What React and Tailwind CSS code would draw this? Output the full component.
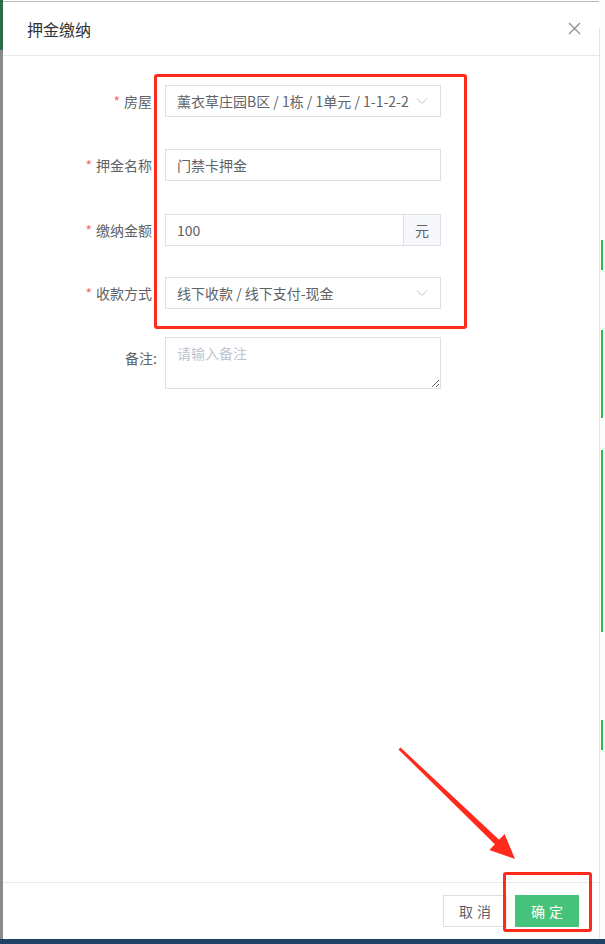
import React from "react";

const font = { fontFamily: '"Noto Sans CJK SC", "Microsoft YaHei", sans-serif' };

// 下拉箭头
const Chevron = () => (
  <svg width="12" height="8" viewBox="0 0 12 8" className="shrink-0">
    <path d="M1 1.5 L6 6.5 L11 1.5" fill="none" stroke="#c0c4cc" strokeWidth="1" />
  </svg>
);

const FormRow = ({ label, required, children, className = "", labelClass = "" }) => (
  <div className={`flex ${className}`}>
    <label className={`w-[162px] shrink-0 text-right text-[14px] leading-[20px] text-[#606266] ${labelClass}`}>
      {required && <span className="mr-[4px] text-[#f56c6c]">*</span>}
      {label}
    </label>
    {children}
  </div>
);

const App = () => {
  return (
    <div className="relative flex h-[944px] w-[605px] flex-col overflow-hidden bg-white" style={font}>
      <div className="flex min-h-0 flex-1">
        {/* 左侧背景条 */}
        <div className="flex w-[3px] shrink-0 flex-col">
          <div className="h-[50px] bg-[#2b6b48]" />
          <div className="flex-1 bg-[#8a8a8a]" />
        </div>

        {/* 弹窗 */}
        <div className="mt-px flex w-[596px] shrink-0 flex-col border-t border-[#b8b8b8] bg-white">
          <div className="flex h-[54px] items-center justify-between border-b border-[#e8e8e8] pl-[24px] pr-[18px]">
            <span className="text-[16px] text-[#303133]">押金缴纳</span>
            <svg width="13" height="13" viewBox="0 0 13 13">
              <path d="M1 1 L12 12 M12 1 L1 12" stroke="#909399" strokeWidth="1.4" />
            </svg>
          </div>

          <div className="flex-1 pt-[29px]">
            <FormRow label="房屋" required className="mb-[32px] items-center" labelClass="pr-[13px]">
              <div className="flex h-[32px] w-[276px] items-center justify-between border border-[#dcdfe6] pl-[11px] pr-[12px] text-[14px] text-[#606266]">
                <span className="whitespace-nowrap">薰衣草庄园B区 / 1栋 / 1单元 / 1-1-2-2</span>
                <Chevron />
              </div>
            </FormRow>

            <FormRow label="押金名称" required className="mb-[33px] items-center" labelClass="pr-[13px]">
              <div className="flex h-[32px] w-[276px] items-center border border-[#dcdfe6] px-[11px] text-[14px] text-[#606266]">
                门禁卡押金
              </div>
            </FormRow>

            <FormRow label="缴纳金额" required className="mb-[31px] items-center" labelClass="pr-[13px]">
              <div className="flex h-[32px] w-[276px] border border-[#dcdfe6] text-[14px] text-[#606266]">
                <div className="flex flex-1 items-center px-[11px]">100</div>
                <div className="flex w-[37px] items-center justify-center border-l border-[#dcdfe6] bg-[#f5f7fa]">元</div>
              </div>
            </FormRow>

            <FormRow label="收款方式" required className="mb-[28px] items-center" labelClass="pr-[13px]">
              <div className="flex h-[32px] w-[276px] items-center justify-between border border-[#dcdfe6] pl-[11px] pr-[12px] text-[14px] text-[#606266]">
                <span>线下收款 / 线下支付-现金</span>
                <Chevron />
              </div>
            </FormRow>

            <FormRow label="备注:" className="items-start" labelClass="pr-[8px] pt-[11px]">
              <textarea
                placeholder="请输入备注"
                className="h-[52px] w-[276px] border border-[#dcdfe6] px-[11px] py-[5px] text-[14px] leading-[21px] text-[#606266] outline-none placeholder:text-[#c0c4cc]"
              />
            </FormRow>
          </div>

          <div className="flex h-[57px] justify-end gap-[8px] border-t border-[#e8e8e8] pr-[20px] pt-[12px]">
            <button className="flex h-[32px] w-[64px] items-center justify-center gap-[4px] border border-[#dcdfe6] bg-white text-[14px] text-[#606266]">
              <span>取</span>
              <span>消</span>
            </button>
            <button className="flex h-[32px] w-[64px] items-center justify-center gap-[4px] bg-[#46c37b] text-[14px] text-white">
              <span>确</span>
              <span>定</span>
            </button>
          </div>
        </div>

        {/* 右侧背景 */}
        <div className="flex flex-1">
          <div className="mt-[28px] w-px bg-[#e4e4e4]" />
          <div className="flex w-[3px] flex-col bg-[#fcfcfc]">
            <div className="h-[240px]" />
            <div className="ml-px h-[30px] w-[2px] bg-[#2cbf4c]" />
            <div className="h-[60px]" />
            <div className="ml-px h-[88px] w-[2px] bg-[#2cbf4c]" />
            <div className="h-[32px]" />
            <div className="ml-px h-[182px] w-[2px] bg-[#2cbf4c]" />
            <div className="h-[88px]" />
            <div className="ml-px h-[30px] w-[2px] bg-[#2cbf4c]" />
          </div>
          <div className="flex-1 bg-[#fcfcfc]" />
        </div>
      </div>
      <div className="h-[5px] bg-[#1f4266]" />

      {/* 标注 */}
      <div className="pointer-events-none absolute left-[154px] top-[74px] h-[255px] w-[313px] rounded-[3px] border-[3px] border-[#ff2a1c]" />
      <div className="pointer-events-none absolute left-[503px] top-[872px] h-[60px] w-[89px] rounded-[3px] border-[3px] border-[#ff2a1c]" />
      <svg className="pointer-events-none absolute left-0 top-0" width="605" height="944">
        <polygon
          points="398.5,749.5 400.5,747.5 499.1,839.8 504.6,834.1 515,859 489.4,849.9 494.9,844.2"
          fill="#ff2a1c"
        />
      </svg>
    </div>
  );
};

export default App;
